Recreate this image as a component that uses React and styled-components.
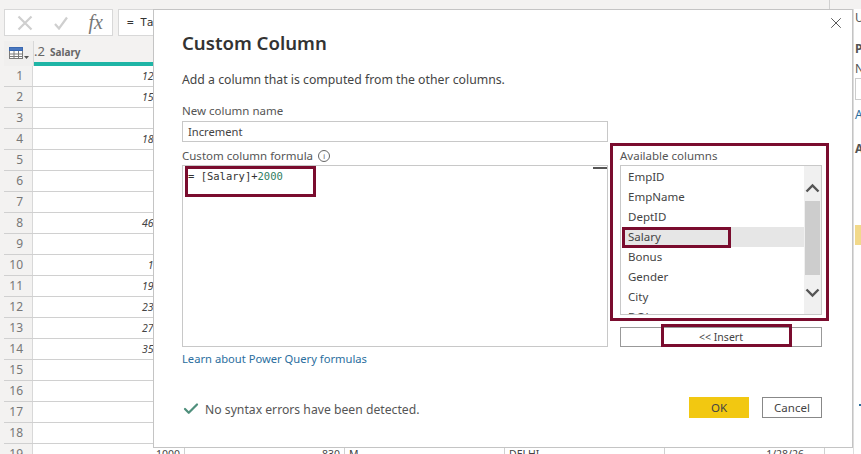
import React from 'react';
import styled, { createGlobalStyle } from 'styled-components';
import { FiX, FiCheck } from 'react-icons/fi';

const GlobalStyle = createGlobalStyle`
  html, body { margin: 0; padding: 0; background: #f3f2f1; }
  body { font-family: "Noto Sans", "Open Sans", sans-serif; overflow: hidden; }
`;

const Page = styled.div`
  position: relative;
  width: 861px;
  height: 454px;
  overflow: hidden;
  background: #f3f2f1;
`;

const Workspace = styled.div`
  display: flex;
  flex-direction: column;
  width: 861px;
`;

const TopStrip = styled.div`
  width: 830px;
  height: 9px;
  box-sizing: border-box;
  border-right: 1px solid #d0d0d0;
`;

const FormulaBar = styled.div`
  display: flex;
  gap: 5px;
  height: 27px;
  margin: 0 0 5px 4px;
`;

const FormulaButtons = styled.div`
  display: flex;
  align-items: center;
  justify-content: space-between;
  width: 109px;
  box-sizing: border-box;
  padding: 0 9px 0 12px;
  background: #fff;
  border: 1px solid #d8d8d8;
`;

const FxMark = styled.span`
  font-family: "Liberation Serif", serif;
  font-style: italic;
  font-size: 20px;
  line-height: 25px;
  color: #777;
`;

const FormulaInput = styled.div`
  flex: 1;
  padding-left: 8px;
  background: #fff;
  border: 1px solid #d8d8d8;
  font-family: "DejaVu Sans Mono", monospace;
  font-size: 11px;
  line-height: 25px;
  color: #333;
`;

const Table = styled.div`
  display: flex;
  flex-direction: column;
  margin-left: 4px;
  background: #fff;
`;

const HeaderRow = styled.div`
  display: flex;
  height: 21px;
  background: #f3f2f1;
`;

const Corner = styled.div`
  display: flex;
  align-items: center;
  justify-content: center;
  width: 29px;
  height: 25px;
  border-right: 1px solid #d8d8d8;
  background: #f0efee;
`;

const ColumnTitle = styled.div`
  font-size: 10px;
  font-weight: 700;
  line-height: 21px;
  color: #666;
  white-space: nowrap;
`;

const PrefixNum = styled.span`
  font-size: 13px;
  font-weight: 400;
  margin-right: 5px;
`;

const QualityBar = styled.div`
  height: 4px;
  margin-left: 30px;
  background: #1fb5a6;
`;

const Row = styled.div`
  display: flex;
  height: 20px;
  border-bottom: 1px solid #d0d0d0;
  font-size: 10.5px;
  line-height: 20px;
  color: #444;
`;

const RowNumber = styled.div`
  width: 29px;
  padding-right: 9px;
  box-sizing: border-box;
  text-align: right;
  font-size: 12px;
  color: #777;
  background: #f3f2f1;
  border-right: 1px solid #d8d8d8;
`;

const Cell = styled.div`
  width: ${(p) => p.$w}px;
  box-sizing: border-box;
  padding: 0 ${(p) => p.$pad ?? 4}px;
  text-align: ${(p) => p.$align || 'left'};
  font-style: ${(p) => (p.$italic ? 'italic' : 'normal')};
  border-right: ${(p) => (p.$line ? '1px solid #d0d0d0' : 'none')};
`;

const SidePanel = styled.div`
  position: absolute;
  top: 9px;
  left: 853px;
  width: 8px;
  height: 445px;
  background: #fff;
  border-left: 1px solid #ddd;
  overflow: hidden;
  font-size: 12px;
  color: #555;
`;

const SideText = styled.div`
  height: ${(p) => p.$h}px;
  margin-top: ${(p) => p.$mt || 0}px;
  padding-left: 1px;
  line-height: ${(p) => p.$h}px;
  font-weight: ${(p) => (p.$bold ? 700 : 400)};
  color: ${(p) => p.$color || '#555'};
`;

const SideInput = styled.div`
  height: 20px;
  margin: 1px 0 0 1px;
  border: 1px solid #ccc;
  border-right: none;
`;

const SideSwatch = styled.div`
  height: 20px;
  margin: 68px 0 0 1px;
  background: #f2d98a;
`;

const SideDot = styled.div`
  width: 2px;
  height: 2px;
  margin: 159px 0 0 5px;
  background: #2a6e9e;
`;

const Dialog = styled.div`
  position: absolute;
  top: 9px;
  left: 153px;
  width: 700px;
  height: 439px;
  box-sizing: border-box;
  padding: 20px 30px 0 28px;
  background: #fff;
  border: 1px solid #c4c4c4;
  display: flex;
  flex-direction: column;
  color: #444;
`;

const CloseButton = styled.div`
  position: absolute;
  top: 4px;
  right: 7px;
  display: flex;
  color: #555;
`;

const Title = styled.h1`
  margin: 0;
  font-size: 18.6px;
  font-weight: 600;
  line-height: 26px;
  color: #333;
`;

const Description = styled.p`
  margin: 14px 0 0;
  font-size: 12.25px;
  line-height: 20px;
  color: #444;
`;

const FieldLabel = styled.label`
  display: flex;
  align-items: center;
  gap: 5px;
  font-size: 11.5px;
  line-height: 16px;
  color: #555;
`;

const NameBlock = styled.div`
  margin-top: 13px;
  width: 426px;
`;

const TextBox = styled.div`
  height: 21px;
  margin-top: 2px;
  box-sizing: border-box;
  padding-left: 5px;
  border: 1px solid #c8c8c8;
  font-size: 11.2px;
  line-height: 19px;
  color: #444;
`;

const Columns = styled.div`
  display: flex;
  margin-top: 6px;
  gap: 12px;
`;

const FormulaColumn = styled.div`
  width: 426px;
`;

const FormulaBox = styled.div`
  position: relative;
  height: 182px;
  margin-top: 1px;
  box-sizing: border-box;
  padding: 3px 5px;
  border: 1px solid #c8c8c8;
  font-family: "DejaVu Sans Mono", monospace;
  font-size: 10.5px;
  line-height: 15px;
  color: #333;
`;

const Number = styled.span`
  color: #2f7d5f;
`;

const FormulaThumb = styled.div`
  position: absolute;
  top: 1px;
  right: 0;
  width: 14px;
  height: 2px;
  background: #555;
`;

const Annotation = styled.div`
  position: absolute;
  left: ${(p) => p.$l}px;
  top: ${(p) => p.$t}px;
  width: ${(p) => p.$w}px;
  height: ${(p) => p.$h}px;
  box-sizing: border-box;
  border: 3px solid #7a0c2e;
  pointer-events: none;
`;

const InfoDot = styled.span`
  display: inline-flex;
  align-items: center;
  justify-content: center;
  width: 10px;
  height: 10px;
  border: 1px solid #666;
  border-radius: 50%;
  font-size: 7px;
  line-height: 1;
`;

const LearnLink = styled.a`
  display: block;
  margin-top: 3px;
  font-size: 11.2px;
  line-height: 17px;
  color: #2a6e9e;
`;

const ColumnsPanel = styled.div`
  position: relative;
  width: 202px;
`;

const ListBox = styled.div`
  display: flex;
  height: 150px;
  margin-top: 1px;
  box-sizing: border-box;
  border: 1px solid #c8c8c8;
  overflow: hidden;
`;

const Items = styled.div`
  flex: 1;
  padding: 1px 0 0 1px;
`;

const Item = styled.div`
  height: 20px;
  padding-left: ${(p) => (p.$selected ? 4 : 6)}px;
  border-left: ${(p) => (p.$selected ? '2px solid #f2c811' : 'none')};
  background: ${(p) => (p.$selected ? '#e6e6e6' : 'transparent')};
  font-size: 11.5px;
  line-height: 20px;
  color: #444;
`;

const Scrollbar = styled.div`
  display: flex;
  flex-direction: column;
  width: 17px;
  background: #f0f0f0;
`;

const ScrollButton = styled.div`
  display: flex;
  align-items: center;
  justify-content: center;
  height: 35px;
  box-sizing: border-box;
  padding-top: ${(p) => p.$top || 0}px;
  color: #555;
`;

const ScrollThumb = styled.div`
  height: 74px;
  margin: 0 1px;
  background: #cdcdcd;
`;

const InsertButton = styled.button`
  display: block;
  width: 100%;
  height: 20px;
  margin-top: 12px;
  padding: 0;
  background: #fff;
  border: 1px solid #999;
  font-family: inherit;
  font-size: 10.5px;
  color: #444;
`;

const Footer = styled.div`
  display: flex;
  align-items: center;
  margin-top: 30px;
`;

const Status = styled.div`
  display: flex;
  align-items: center;
  gap: 5px;
  flex: 1;
  padding-top: 3px;
  font-size: 12.2px;
  color: #555;
`;

const OkButton = styled.button`
  width: 60px;
  height: 21px;
  padding: 0;
  background: #f2c811;
  border: none;
  font-family: inherit;
  font-size: 11.5px;
  color: #444;
`;

const CancelButton = styled.button`
  width: 60px;
  height: 21px;
  margin-left: 13px;
  padding: 0;
  background: #fff;
  border: 1px solid #888;
  font-family: inherit;
  font-size: 11.5px;
  color: #444;
`;

const salaries = ['12000', '15000', '', '18000', '', '', '', '46000', '', '1000', '19000', '23000', '27000', '35000', '', '', '', ''];
const availableColumns = ['EmpID', 'EmpName', 'DeptID', 'Salary', 'Bonus', 'Gender', 'City', 'DOJ'];

const TableIcon = () => (
  <svg width="20" height="13" viewBox="0 0 20 13">
    <rect x="0.5" y="0.5" width="13" height="11" fill="#fff" stroke="#7a7a7a" />
    <rect x="0.5" y="0.5" width="13" height="3" fill="#4a78c0" stroke="#3a68b0" />
    <path d="M5 4v8M9.500 4v8M1 7h12M1 9.500h12" stroke="#7a7a7a" strokeWidth="1" />
    <path d="M15 9h5l-2.500 3z" fill="#555" />
  </svg>
);

const CancelMark = () => (
  <svg width="16" height="16" viewBox="0 0 16 16">
    <path d="M1.500 1.500L14.500 14.500M14.500 1.500L1.500 14.500" fill="none" stroke="#cfcfcf" strokeWidth="2.200" />
  </svg>
);

const ConfirmMark = () => (
  <svg width="14" height="14" viewBox="0 0 14 14">
    <path d="M1 8L5 12.500L13 1.500" fill="none" stroke="#cfcfcf" strokeWidth="2.200" />
  </svg>
);

const Chevron = ({ up }) => (
  <svg width="15" height="10" viewBox="0 0 15 10">
    <path d={up ? 'M1.500 8.500L7.500 2.500L13.500 8.500' : 'M1.500 1.500L7.500 7.500L13.500 1.500'} fill="none" stroke="#555" strokeWidth="2.400" />
  </svg>
);

export default function App() {
  return (
    <Page>
      <GlobalStyle />
      <Workspace>
        <TopStrip />
        <FormulaBar>
          <FormulaButtons>
            <CancelMark />
            <ConfirmMark />
            <FxMark>fx</FxMark>
          </FormulaButtons>
          <FormulaInput>= Table</FormulaInput>
        </FormulaBar>
        <Table>
          <HeaderRow>
            <Corner><TableIcon /></Corner>
            <ColumnTitle><PrefixNum>.2</PrefixNum>Salary</ColumnTitle>
          </HeaderRow>
          <QualityBar />
          {salaries.map((value, i) => (
            <Row key={i}>
              <RowNumber>{i + 1}</RowNumber>
              <Cell $w={152} $align="right" $pad={13} $italic $line>{value}</Cell>
            </Row>
          ))}
          <Row>
            <RowNumber>19</RowNumber>
            <Cell $w={152} $align="right" $line>1000</Cell>
            <Cell $w={160} $align="right" $line>830</Cell>
            <Cell $w={160} $line>M</Cell>
            <Cell $w={160} $line>DELHI</Cell>
            <Cell $w={160} $align="right" $pad={20} $line>1/28/26</Cell>
          </Row>
        </Table>
      </Workspace>
      <SidePanel>
        <SideText $h={16} $mt={1}>U</SideText>
        <SideText $h={16} $mt={15} $bold>P</SideText>
        <SideText $h={16} $mt={4}>N</SideText>
        <SideInput />
        <SideText $h={16} $mt={7} $color="#2a6e9e">A</SideText>
        <SideText $h={16} $mt={18} $bold>A</SideText>
        <SideSwatch />
        <SideDot />
      </SidePanel>
      <Dialog>
        <CloseButton><FiX size={18} strokeWidth={1.3} /></CloseButton>
        <Title>Custom Column</Title>
        <Description>Add a column that is computed from the other columns.</Description>
        <NameBlock>
          <FieldLabel>New column name</FieldLabel>
          <TextBox>Increment</TextBox>
        </NameBlock>
        <Columns>
          <FormulaColumn>
            <FieldLabel>Custom column formula <InfoDot>i</InfoDot></FieldLabel>
            <FormulaBox>
              = [Salary]+<Number>2000</Number>
              <FormulaThumb />
              <Annotation $l={2} $t={0} $w={131} $h={31} />
            </FormulaBox>
            <LearnLink>Learn about Power Query formulas</LearnLink>
          </FormulaColumn>
          <ColumnsPanel>
            <FieldLabel>Available columns</FieldLabel>
            <ListBox>
              <Items>
                {availableColumns.map((name) => (
                  <Item key={name} $selected={name === 'Salary'}>{name}</Item>
                ))}
              </Items>
              <Scrollbar>
                <ScrollButton $top={8}><Chevron up /></ScrollButton>
                <ScrollThumb />
                <ScrollButton><Chevron /></ScrollButton>
              </Scrollbar>
            </ListBox>
            <InsertButton>&lt;&lt; Insert</InsertButton>
            <Annotation $l={-10} $t={-5} $w={219} $h={178} />
            <Annotation $l={2} $t={79} $w={109} $h={21} />
            <Annotation $l={41} $t={176} $w={131} $h={23} />
          </ColumnsPanel>
        </Columns>
        <Footer>
          <Status><FiCheck size={18} strokeWidth={3} color="#4f8f7c" />No syntax errors have been detected.</Status>
          <OkButton>OK</OkButton>
          <CancelButton>Cancel</CancelButton>
        </Footer>
      </Dialog>
    </Page>
  );
}
